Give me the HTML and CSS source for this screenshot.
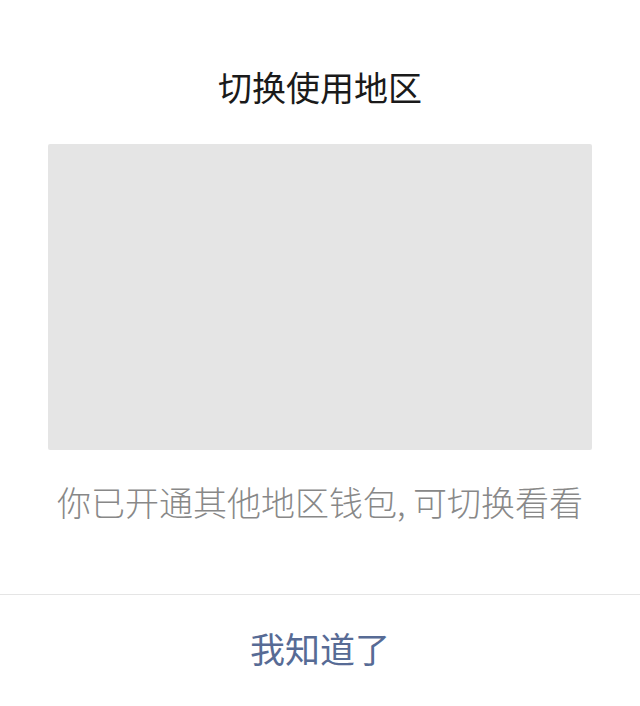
FILE: index.html
```html
<!DOCTYPE html>
<html lang="zh-CN">
<head>
    <meta charset="UTF-8">
    <meta name="viewport" content="width=device-width, initial-scale=1.0">
    <title>切换使用地区</title>
    <link rel="stylesheet" href="styles.css">
</head>
<body>
    <div class="dialog">
        <div class="dialog-body">
            <h2 class="dialog-title">切换使用地区</h2>
            <div class="dialog-image"></div>
            <p class="dialog-desc">你已开通其他地区钱包, 可切换看看</p>
        </div>
        <div class="dialog-footer">
            <a href="#" class="dialog-btn">我知道了</a>
        </div>
    </div>
</body>
</html>
```

FILE: styles.css
```css
/* Base */
body {
    margin: 0;
    padding: 0;
    background-color: #ffffff;
    font-family: "Noto Sans CJK SC", "Noto Sans", sans-serif;
}

/* Dialog */
.dialog {
    width: 640px;
    height: 706px;
    display: flex;
    flex-direction: column;
    background-color: #ffffff;
}

.dialog-body {
    padding: 62px 48px 0;
    height: 532px;
}

.dialog-title {
    margin: 0;
    text-align: center;
    font-size: 34px;
    font-weight: 400;
    line-height: 50px;
    color: #1a1a1a;
}

.dialog-image {
    margin-top: 32px;
    height: 306px;
    background-color: #e5e5e5;
    border-radius: 2px;
}

.dialog-desc {
    margin: 28px -20px 0;
    text-align: center;
    font-size: 34px;
    font-weight: 300;
    line-height: 48px;
    color: #888888;
}

.dialog-footer {
    flex: 1;
    border-top: 1px solid #e5e5e5;
    display: flex;
    align-items: center;
    justify-content: center;
}

.dialog-btn {
    text-decoration: none;
    font-size: 35px;
    font-weight: 400;
    color: #576b95;
    margin-top: -7px;
}
```
